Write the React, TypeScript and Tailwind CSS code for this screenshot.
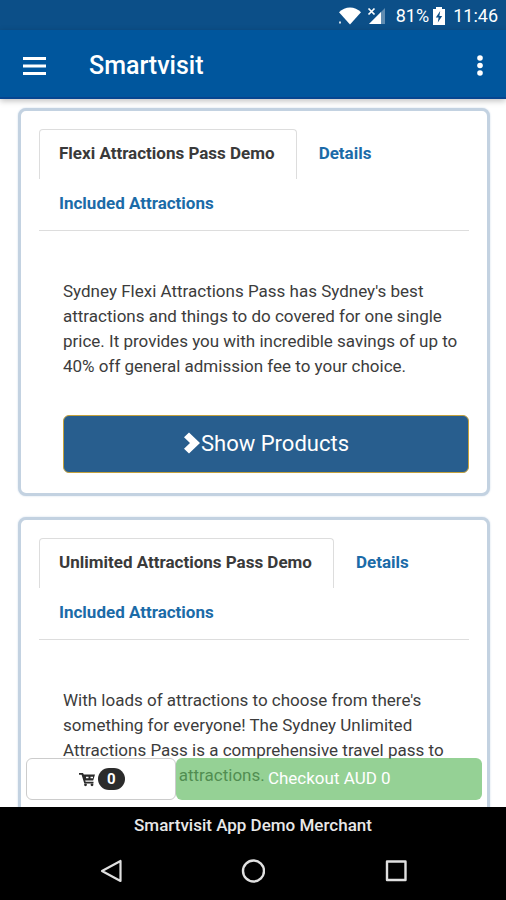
import React, { useState } from 'react';

type Pass = {
  id: string;
  name: string;
  description: string;
};

const passes: Pass[] = [
  {
    id: 'flexi',
    name: 'Flexi Attractions Pass Demo',
    description:
      "Sydney Flexi Attractions Pass has Sydney's best attractions and things to do covered for one single price. It provides you with incredible savings of up to 40% off general admission fee to your choice.",
  },
  {
    id: 'unlimited',
    name: 'Unlimited Attractions Pass Demo',
    description:
      "With loads of attractions to choose from there's something for everyone! The Sydney Unlimited Attractions Pass is a comprehensive travel pass to Sydney's finest attractions.",
  },
];

const StatusBar = () => (
  <div className="flex h-[30px] shrink-0 items-center justify-end bg-[#0c4f88] pt-0.5 pr-2 text-lg text-white">
    <svg className="mr-1 h-5 w-6" viewBox="0 0 24 20" fill="#fff">
      <path d="M12 18.500 1 6.200C7-.2 17-.2 23 6.200z" />
      <rect x="1" y="15.500" width="2" height="2" opacity=".8" />
    </svg>
    <svg className="mr-2.5 h-5 w-5" viewBox="0 0 20 20">
      <path d="M19 2v16H3z" fill="#fff" opacity=".35" />
      <path d="M15 6v12H3z" fill="#fff" />
      <path d="m2.500 2.500 6 6m0-6-6 6" stroke="#fff" strokeWidth="1.700" />
    </svg>
    <span className="mr-0.5">81%</span>
    <svg className="mr-1.5 h-5 w-4" viewBox="0 0 16 20">
      <path d="M5 1h6v2h3v16H2V3h3z" fill="#fff" />
      <path d="M9.200 5 4.800 11.500h2.800L6.800 16.500l4.400-6.500H8.400z" fill="#0c4f88" />
    </svg>
    <span>11:46</span>
  </div>
);

const AppHeader = () => (
  <header className="z-10 flex shrink-0 items-center border-b-2 border-[#064590] bg-[#00569d] pt-[18px] pr-4 pb-3.5 pl-[22px] text-white shadow-[0_2px_6px_rgba(0,0,0,0.25)]">
    <button type="button" aria-label="Open menu" className="flex h-8 items-center">
      <svg className="h-5 w-6" viewBox="0 0 24 20" fill="#fff">
        <path d="M1 1h23v3H1zM1 8.500h23v3H1zM1 16h23v3H1z" />
      </svg>
    </button>
    <h1 className="ml-[43px] flex-1 text-[25px] leading-[35px] font-medium">Smartvisit</h1>
    <button type="button" aria-label="More options" className="flex h-8 items-center">
      <svg className="h-6 w-5" viewBox="0 0 20 24" fill="#fff">
        <circle cx="10" cy="4" r="2.800" />
        <circle cx="10" cy="11.500" r="2.800" />
        <circle cx="10" cy="19" r="2.800" />
      </svg>
    </button>
  </header>
);

const PassCard = ({ pass }: { pass: Pass }) => {
  const [activeTab, setActiveTab] = useState(pass.name);
  const tabs = [pass.name, 'Details', 'Included Attractions'];

  return (
    <section className="rounded-lg border-3 border-[#c3d2e1] bg-white px-[18px] pt-[18px] pb-5 shadow-[0_0_2px_#c9d8e8]">
      <div role="tablist" className="flex flex-wrap gap-x-[2px] border-b border-[#dddddd] pb-px">
        {tabs.map((tab) => (
          <button
            key={tab}
            type="button"
            role="tab"
            aria-selected={activeTab === tab}
            onClick={() => setActiveTab(tab)}
            className={`h-[50px] rounded-t border border-b-0 pr-[21px] pb-0.5 pl-[19px] text-[17px] font-bold ${activeTab === tab ? 'border-[#dddddd] text-[#3a3a3a]' : 'border-transparent text-[#1b6ba8]'}`}
          >
            {tab}
          </button>
        ))}
      </div>

      <div className="pt-12 pl-6">
        <p className="text-[17px] leading-[25px] text-[#3c3c3c]">{pass.description}</p>
        <button
          type="button"
          className="mt-9 flex h-[58px] w-full items-center justify-center rounded-md border border-[#c4a13c] bg-[#285e8e] pb-0.5 text-[22px] text-white"
        >
          <svg className="h-[22px] w-[18px]" viewBox="0 0 18 22" fill="#fff">
            <path d="M6 .5 17 11 6 21.500 1 16.800 7 11 1 5.200z" />
          </svg>
          Show Products
        </button>
      </div>
    </section>
  );
};

const CheckoutBar = () => (
  <div className="absolute right-6 bottom-[7px] left-[26px] flex h-[42px]">
    <button
      type="button"
      aria-label="Cart, 0 items"
      className="flex w-[33%] items-center justify-center gap-0.5 rounded-md border border-[#cccccc] bg-white"
    >
      <svg className="h-[18px] w-[18px]" viewBox="0 0 18 18" fill="#2b2b2b">
        <path d="M1 3h4l.8 1.500H17l-1.800 6H7.200l.4 1.300H15.500V13.500H6.300L3.600 4.800H1z" />
        <circle cx="7.500" cy="14.800" r="1.400" />
        <circle cx="14" cy="14.800" r="1.400" />
        <path d="M8 7.500h2.500M12.500 7.500H15" stroke="#fff" strokeWidth="1.400" />
      </svg>
      <span className="rounded-full bg-[#2b2b2b] px-[9px] text-[15px] leading-[22px] font-bold text-white">0</span>
    </button>
    <button type="button" className="flex-1 rounded-md bg-[#5cb85c]/65 text-[17px] text-white">
      Checkout AUD 0
    </button>
  </div>
);

const BottomNav = () => (
  <footer className="shrink-0 bg-black text-white">
    <p className="pt-1.5 text-center text-[17px] leading-6 font-medium text-[#e8e8e8]">Smartvisit App Demo Merchant</p>
    <nav className="flex h-[63px] items-center justify-center gap-[118px] pt-1">
      <button type="button" aria-label="Back">
        <svg className="h-6 w-6" viewBox="0 0 24 24" fill="none" stroke="#e0e0e0" strokeWidth="2.200" strokeLinejoin="round">
          <path d="M21.500 2v20L3 12z" />
        </svg>
      </button>
      <button type="button" aria-label="Home">
        <svg className="h-6 w-6" viewBox="0 0 24 24" fill="none" stroke="#e0e0e0" strokeWidth="2.400">
          <circle cx="12.500" cy="12" r="10.500" />
        </svg>
      </button>
      <button type="button" aria-label="Recent apps">
        <svg className="h-6 w-6" viewBox="0 0 24 24" fill="none" stroke="#e0e0e0" strokeWidth="2.400" strokeLinejoin="round">
          <rect x="4" y="2.500" width="18.500" height="18.500" />
        </svg>
      </button>
    </nav>
  </footer>
);

export default function App() {
  return (
    <div className="flex h-screen flex-col bg-white font-['Roboto',sans-serif]">
      <StatusBar />
      <AppHeader />
      <div className="relative min-h-0 flex-1">
        <main className="h-full space-y-[21px] overflow-y-auto pt-[9px] pr-4 pb-14 pl-[18px] [scrollbar-width:none]">
          {passes.map((pass) => (
            <PassCard key={pass.id} pass={pass} />
          ))}
        </main>
        <CheckoutBar />
      </div>
      <BottomNav />
    </div>
  );
}
